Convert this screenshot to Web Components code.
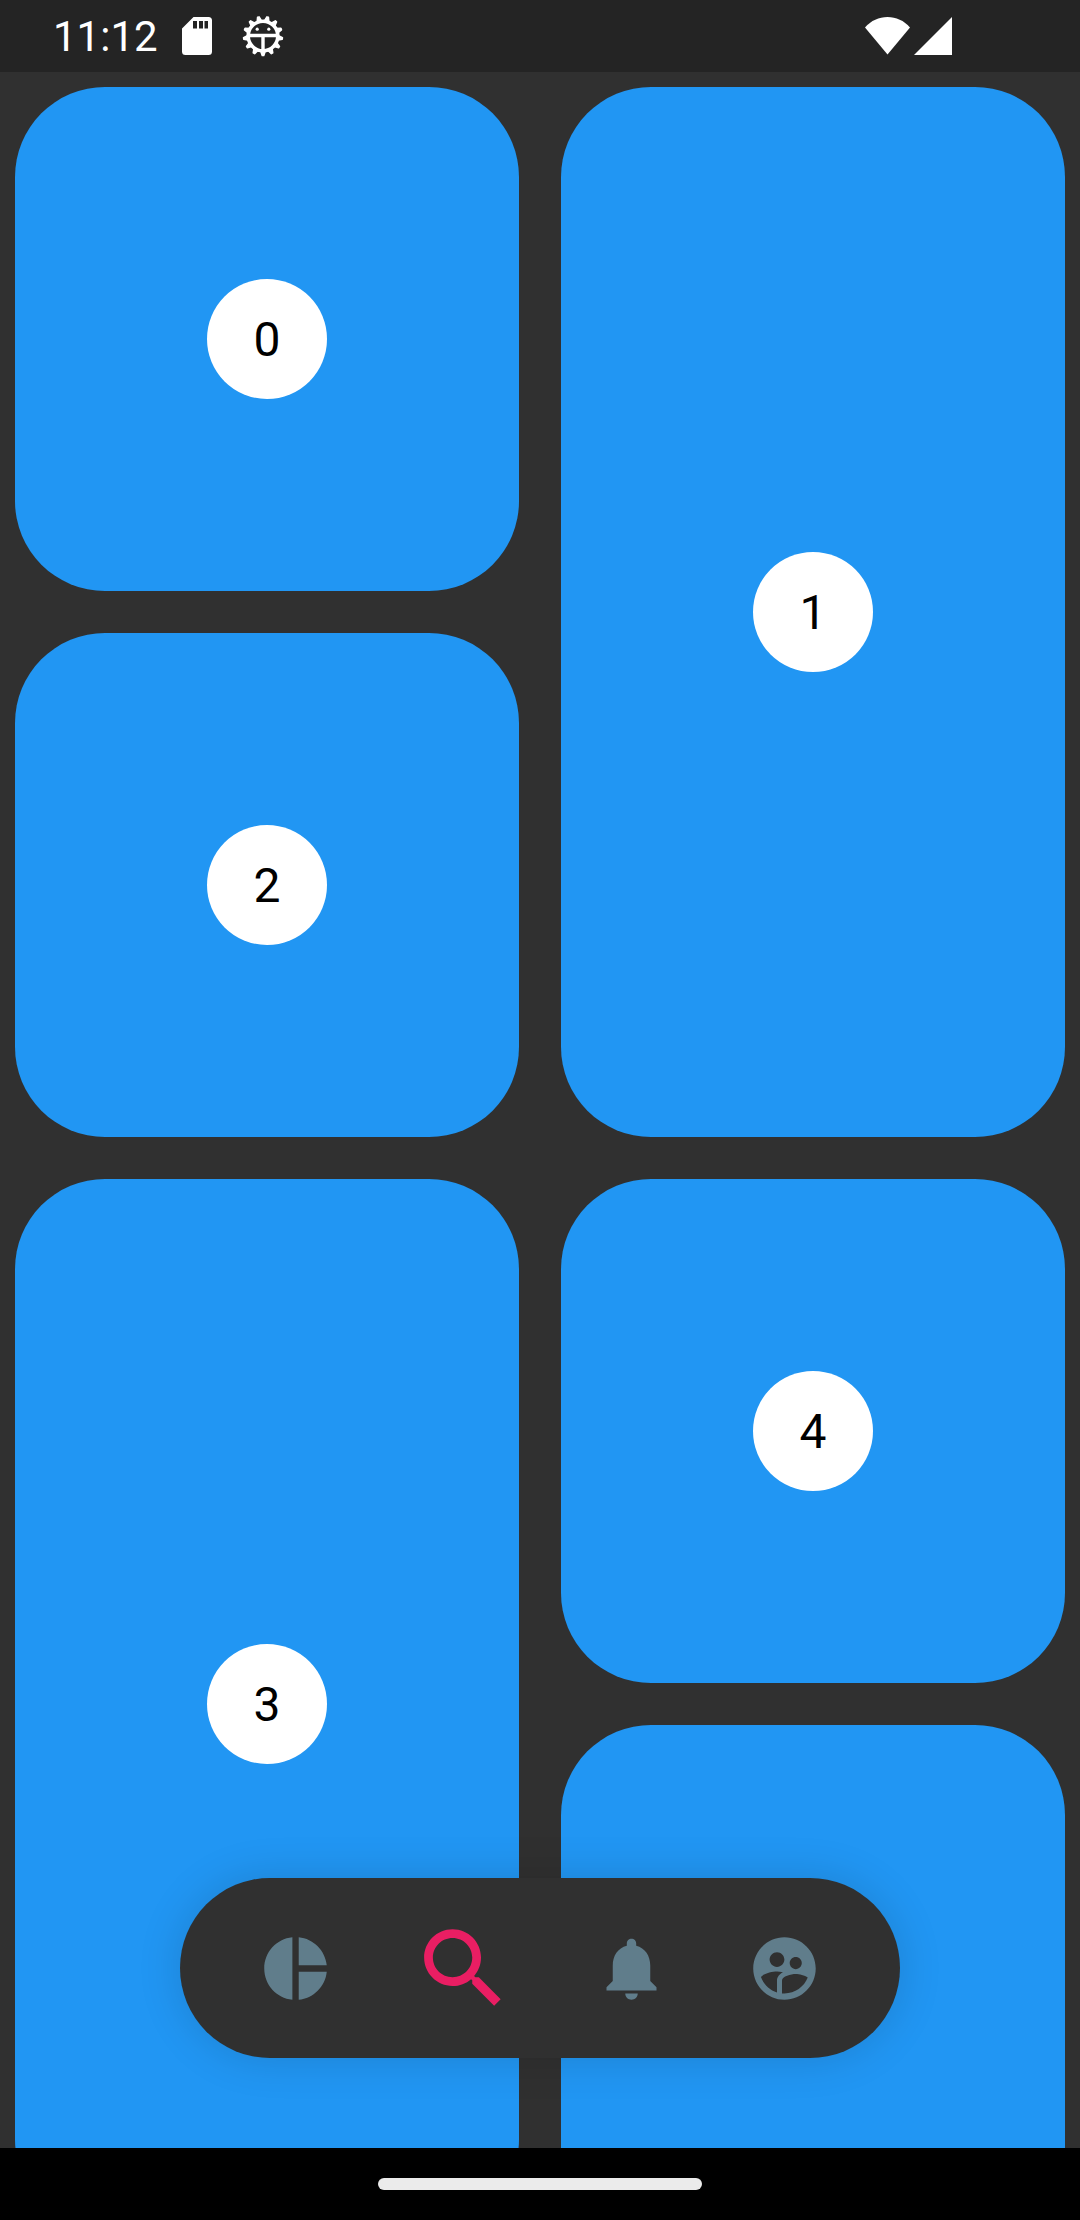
<!DOCTYPE html>
<html lang="en">
<head>
<meta charset="utf-8">
<meta name="viewport" content="width=device-width, initial-scale=1">
<title>Tiles</title>
<style>
  html, body { margin: 0; height: 100%; background: #303030; }
  body { font-family: Roboto, "Noto Sans", sans-serif; }
</style>
</head>
<body>
<app-shell>
  <status-bar slot="top" time="11:12"></status-bar>
  <tile-grid>
    <number-tile>0</number-tile>
    <number-tile tall>1</number-tile>
    <number-tile>2</number-tile>
    <number-tile tall>3</number-tile>
    <number-tile>4</number-tile>
    <number-tile tall></number-tile>
  </tile-grid>
  <nav-bar slot="nav">
    <nav-item label="Overview" icon="pie"></nav-item>
    <nav-item label="Search" icon="search" selected></nav-item>
    <nav-item label="Notifications" icon="bell"></nav-item>
    <nav-item label="People" icon="people"></nav-item>
  </nav-bar>
  <gesture-bar slot="bottom"></gesture-bar>
</app-shell>

<script>
const render = (host, html) => {
  const t = document.createElement('template');
  t.innerHTML = html;
  host.attachShadow({ mode: 'open' }).append(t.content.cloneNode(true));
};

customElements.define('app-shell', class extends HTMLElement {
  constructor() {
    super();
    render(this, `
      <style>
        :host { display: flex; flex-direction: column; height: 100vh; background: #303030; }
        main { position: relative; flex: 1; min-height: 0; overflow: hidden; }
        .dock { position: absolute; left: 0; right: 0; bottom: 90px; display: flex; justify-content: center; }
      </style>
      <slot name="top"></slot>
      <main>
        <slot></slot>
        <div class="dock"><slot name="nav"></slot></div>
      </main>
      <slot name="bottom"></slot>`);
  }
});

customElements.define('status-bar', class extends HTMLElement {
  constructor() {
    super();
    // Gear with thirteen tapered, rounded teeth around the ring.
    let teeth = '';
    for (let i = 0; i < 13; i++) {
      teeth += `<path d="M18.500 35.500H23.500L21.800 40.500H20.200z" transform="rotate(${(i * 360 / 13).toFixed(2)} 21 21)"/>`;
    }
    render(this, `
      <style>
        :host { display: flex; justify-content: space-between; align-items: center; flex: none;
          height: 72px; padding: 0 128px 0 53px; box-sizing: border-box; background: #242424; color: #fff; }
        .group { display: flex; align-items: center; }
        .time { font-size: 42px; line-height: 48px; padding-top: 2px; margin-right: 24px; }
        .sd { margin-right: 30px; }
        .wifi { margin-right: 4px; }
        svg { display: block; }
      </style>
      <div class="group">
        <span class="time"></span>
        <svg class="sd" width="30" height="38" viewBox="0 0 30 38" aria-hidden="true">
          <path fill="#fff" fill-rule="evenodd" d="M11.500 0H26.500a3.500 3.500 0 0 1 3.500 3.500V34.500a3.500 3.500 0 0 1-3.500 3.500H3.500A3.500 3.500 0 0 1 0 34.500V11.500zM11 4v7.500h4V4zM17 4v7.500h4V4zM22.500 4v7.500h3.500V4z"/>
        </svg>
        <svg width="42" height="42" viewBox="0 0 42 42" fill="none" stroke="#fff" aria-hidden="true">
          <g fill="#fff" stroke-width="1.500" stroke-linejoin="round">${teeth}</g>
          <circle cx="21" cy="21" r="14.800" stroke-width="3.600"/>
          <path d="M6 20.500H36M21 20.500V36" stroke-width="3.400"/>
          <circle cx="15.200" cy="14.200" r="1.600" fill="#fff" stroke="none"/>
          <circle cx="26.800" cy="14.200" r="1.600" fill="#fff" stroke="none"/>
        </svg>
      </div>
      <div class="group">
        <svg class="wifi" width="45" height="38" viewBox="0 0 45 38" aria-hidden="true">
          <path fill="#fff" d="M0 10.500C6 3.500 14 0 22.500 0S39 3.500 45 10.500L22.500 37.500z"/>
        </svg>
        <svg width="38" height="38" viewBox="0 0 38 38" aria-hidden="true"><path fill="#fff" d="M38 0V38H0z"/></svg>
      </div>`);
    this.shadowRoot.querySelector('.time').textContent = this.getAttribute('time');
  }
});

customElements.define('tile-grid', class extends HTMLElement {
  constructor() {
    super();
    render(this, `
      <style>
        :host { display: grid; grid-template-columns: 1fr 1fr; grid-auto-rows: calc((100vw - 72px) / 2);
          grid-auto-flow: dense; gap: 42px; padding: 15px; }
      </style>
      <slot></slot>`);
  }
});

customElements.define('number-tile', class extends HTMLElement {
  constructor() {
    super();
    render(this, `
      <style>
        :host { display: flex; align-items: center; justify-content: center; border-radius: 90px; background: #2196f3; }
        :host([tall]) { grid-row: span 2; }
        .badge { display: flex; align-items: center; justify-content: center; width: 120px; height: 120px;
          box-sizing: border-box; padding-top: 2px;
          border-radius: 50%; background: #fff; color: #000; font-size: 48px; line-height: 56px; }
      </style>
      <div class="badge"><slot></slot></div>`);
  }
});

customElements.define('nav-bar', class extends HTMLElement {
  constructor() {
    super();
    render(this, `
      <style>
        :host { display: block; width: 66.667%; }
        nav { display: flex; align-items: center; justify-content: space-evenly; height: 180px;
          border-radius: 90px; background: #303030; box-shadow: 0 0 45px rgba(0, 0, 0, .14); }
      </style>
      <nav aria-label="Main"><slot></slot></nav>`);
  }
});

const ICONS = {
  pie: 'M11 2v20c-5.070-.5-9-4.790-9-10s3.930-9.500 9-10zm2.030 0v8.990H22c-.47-4.740-4.240-8.520-8.970-8.990zm0 11.010V22c4.740-.47 8.500-4.250 8.970-8.990h-8.970z',
  search: 'M15.500 14h-.79l-.28-.27C15.410 12.590 16 11.110 16 9.500 16 5.910 13.090 3 9.500 3S3 5.910 3 9.500 5.910 16 9.500 16c1.610 0 3.090-.59 4.230-1.570l.27.28v.79l5 4.990L20.490 19l-4.990-5zm-6 0C7.010 14 5 11.990 5 9.500S7.010 5 9.500 5 14 7.010 14 9.500 11.990 14 9.500 14z',
  bell: 'M12 22c1.100 0 2-.9 2-2h-4c0 1.100.89 2 2 2zm6-6v-5c0-3.070-1.640-5.640-4.500-6.320V4c0-.83-.67-1.500-1.500-1.500s-1.500.67-1.500 1.500v.68C7.630 5.360 6 7.920 6 11v5l-2 2v1h16v-1l-2-2z',
  people: 'M11.990 2c-5.520 0-10 4.480-10 10s4.480 10 10 10 10-4.480 10-10-4.480-10-10-10zm3.610 6.340c1.070 0 1.930.86 1.930 1.930s-.86 1.930-1.930 1.930-1.930-.86-1.930-1.930c-.01-1.070.86-1.930 1.930-1.930zm-6-1.580c1.300 0 2.360 1.060 2.360 2.360s-1.060 2.360-2.360 2.360-2.360-1.060-2.360-2.360c0-1.310 1.050-2.360 2.360-2.360zm0 9.130v3.750c-2.400-.75-4.300-2.600-5.140-4.960 1.050-1.120 3.670-1.690 5.140-1.690.53 0 1.200.08 1.900.22-1.640.87-1.900 2.020-1.900 2.680zM11.990 20c-.27 0-.53-.01-.79-.04v-4.070c0-1.420 2.940-2.130 4.400-2.130 1.070 0 2.920.39 3.840 1.150-1.170 2.970-4.060 5.090-7.450 5.090z'
};

customElements.define('nav-item', class extends HTMLElement {
  constructor() {
    super();
    render(this, `
      <style>
        :host { display: block; color: #607d8b; --size: 75px; }
        :host([selected]) { color: #e91e63; --size: 105px; }
        button { display: block; margin: 0; padding: 0; border: 0; background: none; color: inherit; cursor: pointer; }
        svg { display: block; width: var(--size); height: var(--size); fill: currentColor; }
      </style>
      <button type="button"><svg viewBox="0 0 24 24" aria-hidden="true"><path d="${ICONS[this.getAttribute('icon')]}"/></svg></button>`);
    const button = this.shadowRoot.querySelector('button');
    button.setAttribute('aria-label', this.getAttribute('label'));
    if (this.hasAttribute('selected')) button.setAttribute('aria-current', 'page');
  }
});

customElements.define('gesture-bar', class extends HTMLElement {
  constructor() {
    super();
    render(this, `
      <style>
        :host { display: flex; align-items: center; justify-content: center; flex: none; height: 72px; background: #000; }
        .pill { width: 30%; height: 12px; border-radius: 6px; background: #ebebeb; }
      </style>
      <div class="pill"></div>`);
  }
});
</script>
</body>
</html>
